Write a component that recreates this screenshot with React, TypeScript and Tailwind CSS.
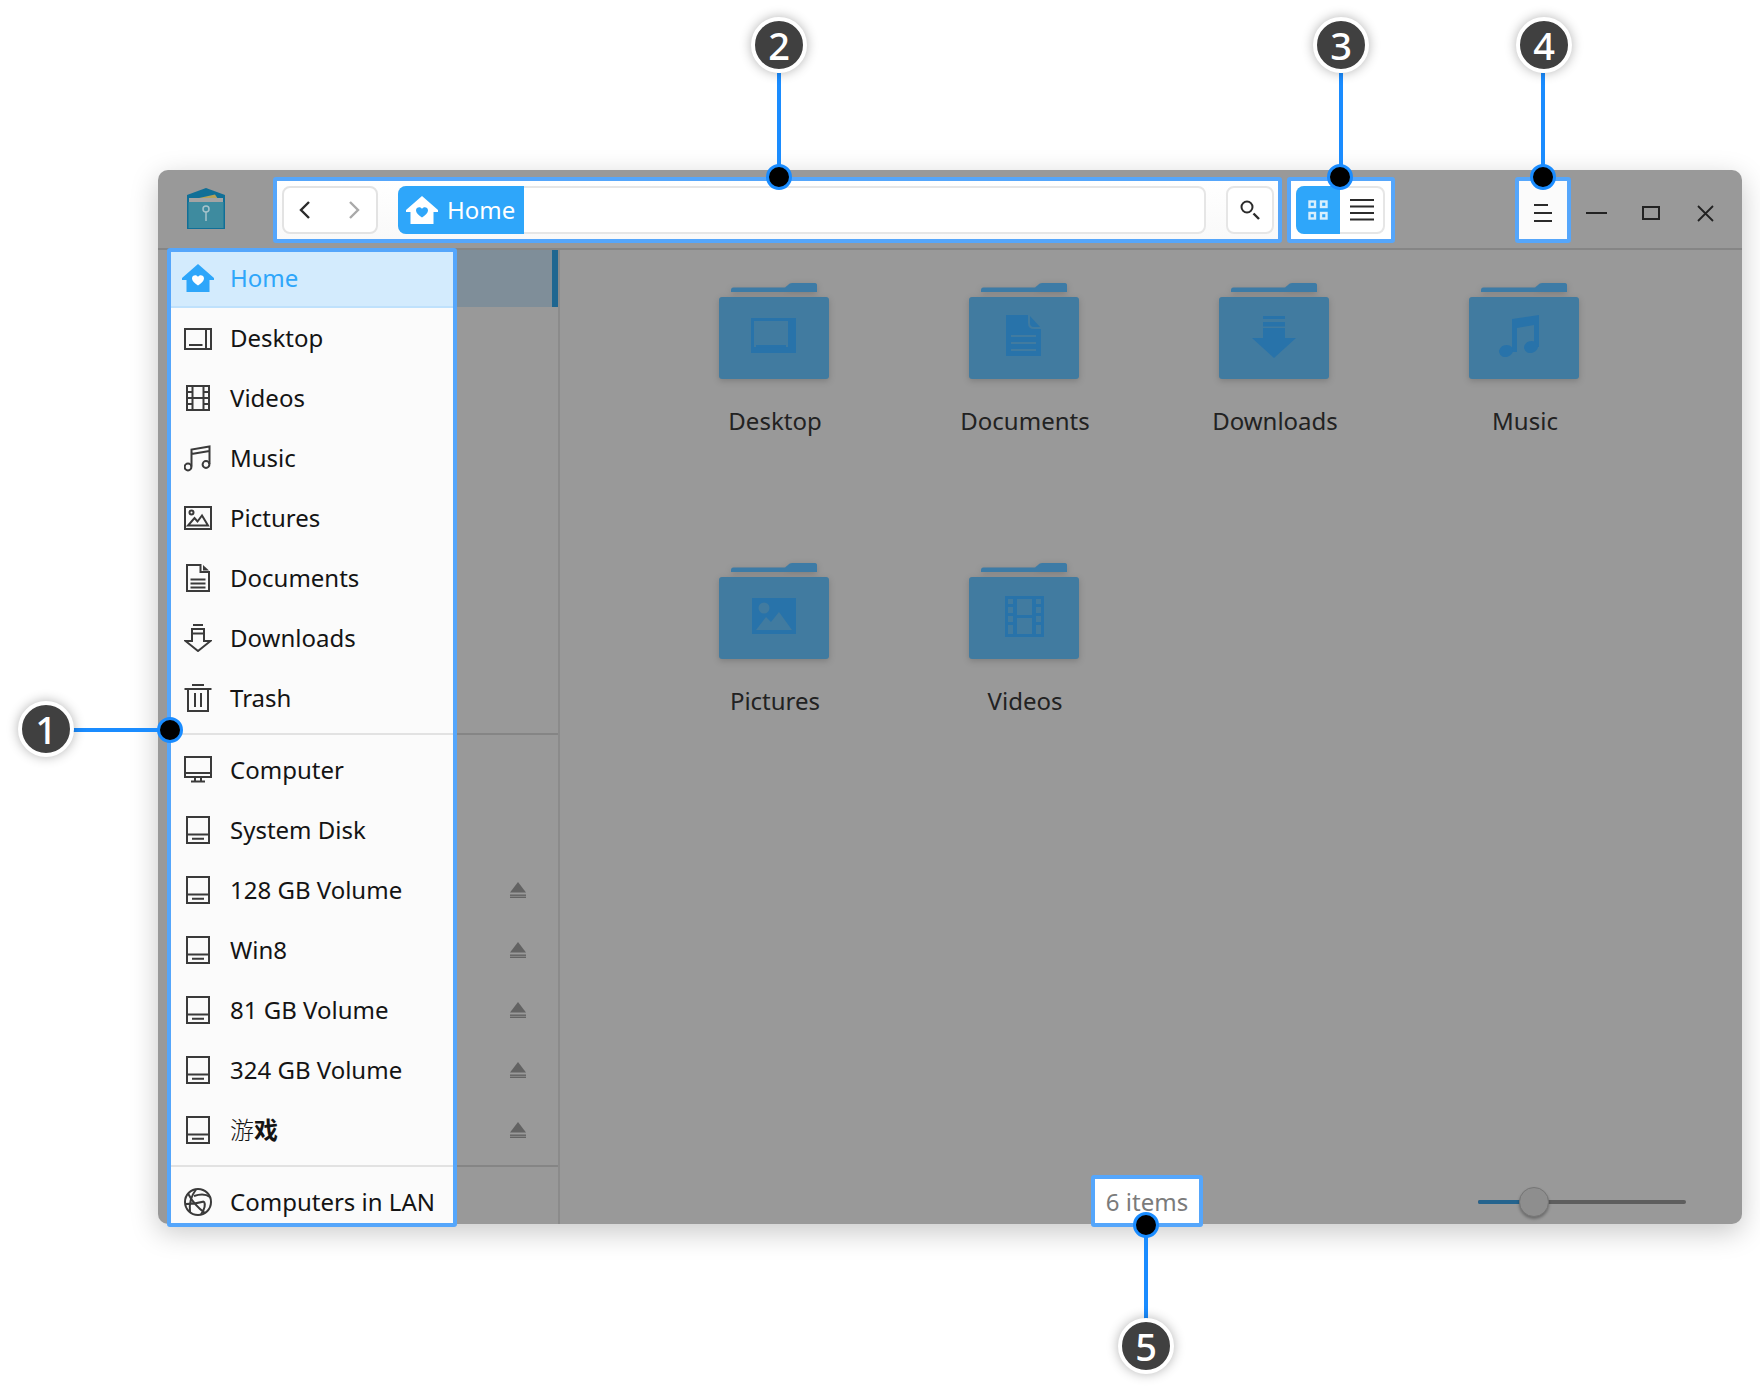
import type { ReactNode } from "react";

const FONT = 'font-["Noto_Sans","Noto_Sans_CJK_SC",sans-serif]';

// sidebar line icons, 28 box
const Line = ({ children }: { children: ReactNode }) => (
  <svg width="28" height="28" viewBox="0 0 28 28" fill="none" stroke="#3a3a3a" strokeWidth="2" className="shrink-0">
    {children}
  </svg>
);

const HouseIcon = ({ body, heart }: { body: string; heart: string }) => (
  <svg width="32" height="28" viewBox="0 0 32 28" className="shrink-0">
    <path d="M16 0 L32 14 V16 H27.5 V28 H4.5 V16 H0 V14 Z" fill={body} />
    <path d="M16 21.5 C12.5 19 10 17 10 14.4 C10 12.4 11.6 11.2 13.2 11.2 C14.4 11.2 15.4 11.8 16 12.8 C16.6 11.8 17.6 11.2 18.8 11.2 C20.4 11.2 22 12.4 22 14.4 C22 17 19.5 19 16 21.5 Z" fill={heart} />
  </svg>
);

const DesktopIcon = () => (
  <Line>
    <rect x="1" y="5" width="26" height="20" />
    <path d="M22 5V25M5 21H18.5" />
  </Line>
);
const VideosIcon = () => (
  <Line>
    <rect x="3" y="2" width="22" height="24" />
    <path d="M8.5 2V26M19.5 2V26M3 8H8.5M3 14H25M3 20H8.5M19.5 8H25M19.5 20H25" />
  </Line>
);
const MusicIcon = () => (
  <Line>
    <path d="M7.5 22.5V5.5L25.5 2.5V20M7.5 10L25.5 7" />
    <circle cx="4" cy="23" r="3.4" />
    <circle cx="22" cy="20.5" r="3.4" />
  </Line>
);
const PicturesIcon = () => (
  <Line>
    <rect x="1" y="3" width="26" height="22" />
    <circle cx="7.5" cy="8.5" r="2" />
    <path d="M4 21.5H24L18 11.5L13.5 17.5L10.5 14Z" />
  </Line>
);
const DocumentsIcon = () => (
  <Line>
    <path d="M3 1H16.5V8H25V27H3Z" />
    <path d="M19 1L25 6.5H19Z" fill="#3a3a3a" stroke="none" />
    <path d="M6.5 15.5H21.5M6.5 19.5H21.5M6.5 23.5H21.5" />
  </Line>
);
const DownloadsIcon = () => (
  <Line>
    <path d="M9 1H19M8 5H20V9.5H8ZM8 9.5V17H1.5L14 27L26.5 17H20V9.5" />
  </Line>
);
const TrashIcon = () => (
  <Line>
    <path d="M8 1H20M0.5 5H27.5M4 5V27H24V5M11 9V23M17 9V23" />
  </Line>
);
const ComputerIcon = () => (
  <Line>
    <rect x="1" y="1" width="26" height="20" />
    <path d="M1 17H27M11 21V25M17 21V25M7 25.5H21" />
  </Line>
);
const DiskIcon = () => (
  <Line>
    <rect x="3" y="1" width="22" height="26" />
    <path d="M3 18.5H25M8 22.8H20" />
  </Line>
);
const LanIcon = () => (
  <Line>
    <circle cx="14" cy="14" r="13" />
    <path d="M4 5.5C8 13 14 20 21 25M12 1.5C7 8 5 15 6 24M10 8C16 6 22 6 26 9M20 13.5C22 17 20 22 17 26.5M2 16C8 16 15 15 20 13.5" />
  </Line>
);

const Eject = () => (
  <svg width="16" height="16" viewBox="0 0 16 16" fill="#636363">
    <path d="M8 0L16 10.5H0Z" />
    <rect y="12.5" width="16" height="1.4" />
    <rect y="14.6" width="16" height="1.4" />
  </svg>
);

const Logo = () => (
  <svg width="38" height="42" viewBox="0 0 38 42" className="shrink-0 mt-[11px]">
    <path d="M0 7L19 0L38 7V41H0Z" fill="#106f97" />
    <path d="M3 12L28 6.5L33 14H3Z" fill="#b4a25a" />
    <rect x="2" y="10" width="34" height="5" fill="#a3a3a3" />
    <rect x="1.5" y="14" width="35" height="26" fill="#3e8b9f" />
    <circle cx="19" cy="21" r="3" fill="none" stroke="#a6c3cb" strokeWidth="1.5" />
    <path d="M19 24V33" stroke="#a6c3cb" strokeWidth="1.5" />
  </svg>
);

// folder glyphs, drawn on the body
const G = "#2873aa";
const glyphs: Record<string, ReactNode> = {
  Desktop: (
    <>
      <rect x="32" y="21" width="45" height="35" fill={G} />
      <rect x="35" y="24" width="34" height="26" fill="#417ba0" />
      <rect x="37" y="48" width="30" height="2.5" fill={G} />
    </>
  ),
  Documents: (
    <>
      <path d="M37 18H60L72 31V59H37Z" fill={G} />
      <path d="M60 18V26C60 29 62 31 65 31H72" fill="none" stroke="#417ba0" strokeWidth="2" />
      <path d="M42 39H67M42 46H67M42 53H67" stroke="#417ba0" strokeWidth="2" />
    </>
  ),
  Downloads: (
    <>
      <rect x="44" y="19" width="22" height="3" fill={G} />
      <rect x="44" y="25" width="22" height="4.5" fill={G} />
      <path d="M44 31H66V41H77L55 61L33 41H44Z" fill={G} />
    </>
  ),
  Music: (
    <>
      <path d="M43 22L70 18V50H65V28L48 31V55H43Z" fill={G} />
      <ellipse cx="37" cy="54" rx="7" ry="6" fill={G} transform="rotate(-15 37 54)" />
      <ellipse cx="62" cy="50" rx="7" ry="6" fill={G} transform="rotate(-15 62 50)" />
    </>
  ),
  Pictures: (
    <>
      <rect x="33" y="21" width="44" height="36" fill={G} />
      <circle cx="45" cy="31" r="5.5" fill="#417ba0" />
      <path d="M37 53L47 40L52 45L60 35L73 53Z" fill="#417ba0" />
    </>
  ),
  Videos: (
    <>
      <rect x="36" y="19" width="39" height="41" fill={G} />
      <path d="M39 22H44V27H39ZM39 30H44V36H39ZM39 39H44V45H39ZM39 48H44V57H39ZM67 22H72V27H67ZM67 30H72V36H67ZM67 39H72V45H67ZM67 48H72V57H67ZM48 22H63V38H48ZM48 41H63V57H48Z" fill="#417ba0" />
    </>
  ),
};

const Folder = ({ name }: { name: string }) => (
  <div className="h-[280px] flex flex-col items-center">
    <svg width="110" height="96" viewBox="0 0 110 96" className="drop-shadow-[0_2px_3px_rgba(0,0,0,0.18)]">
      <path d="M12 7C12 5.5 13 4.5 14 4.5H66L69 2C70 0.7 71.5 0 73 0H96C97.5 0 98 1 98 2V9H12Z" fill="#3d7ba6" />
      <rect x="0" y="14" width="110" height="82" rx="3" fill="#417ba0" />
      <g transform="translate(0 14)">{glyphs[name]}</g>
    </svg>
    <span className="mt-[25px] ml-[2px] text-[24px] leading-[34px] text-[#222222]">{name}</span>
  </div>
);

const Callout = ({ n, x, y }: { n: number; x: number; y: number }) => (
  <div
    className="absolute w-[56px] h-[56px] rounded-full bg-[#404040] border-4 border-white shadow-[0_0_12px_rgba(0,0,0,0.3)] flex items-center justify-center text-white text-[38px] font-medium z-30"
    style={{ left: x - 28, top: y - 28 }}
  >
    {n}
  </div>
);

const Dot = ({ x, y }: { x: number; y: number }) => (
  <div
    className="absolute w-[26px] h-[26px] rounded-full bg-black border-[3px] border-[#1a8cff] z-30"
    style={{ left: x - 13, top: y - 13 }}
  />
);

const places = [
  { name: "Desktop", icon: <DesktopIcon /> },
  { name: "Videos", icon: <VideosIcon /> },
  { name: "Music", icon: <MusicIcon /> },
  { name: "Pictures", icon: <PicturesIcon /> },
  { name: "Documents", icon: <DocumentsIcon /> },
  { name: "Downloads", icon: <DownloadsIcon /> },
  { name: "Trash", icon: <TrashIcon /> },
];

const disks: { name: ReactNode; icon: ReactNode }[] = [
  { name: "Computer", icon: <ComputerIcon /> },
  { name: "System Disk", icon: <DiskIcon /> },
  { name: "128 GB Volume", icon: <DiskIcon /> },
  { name: "Win8", icon: <DiskIcon /> },
  { name: "81 GB Volume", icon: <DiskIcon /> },
  { name: "324 GB Volume", icon: <DiskIcon /> },
  {
    name: (
      <>
        <span className="font-light">游</span>
        <span className="font-bold">戏</span>
      </>
    ),
    icon: <DiskIcon />,
  },
];

const Row = ({ icon, children }: { icon: ReactNode; children: ReactNode }) => (
  <div className="h-[60px] shrink-0 flex items-center pl-[13px] gap-[18px] text-[24px] text-[#141414] whitespace-nowrap">
    {icon}
    <span>{children}</span>
  </div>
);

const LIT = "border-4 border-[#55a6fb] rounded-[3px] bg-[#fbfbfb]";

export default function App() {
  return (
    <div className={`relative w-[1760px] h-[1392px] bg-white overflow-hidden pt-[170px] pl-[158px] ${FONT}`}>
      <div className="w-[1584px] h-[1054px] rounded-[10px] bg-[#999999] shadow-[0_8px_28px_rgba(0,0,0,0.22)] flex flex-col">
        {/* title bar */}
        <div className="h-[80px] shrink-0 border-b-2 border-[#858585] flex items-start pt-[7px] pl-[29px]">
          <Logo />
          <div className={`${LIT} ml-[48px] w-[1009px] h-[66px] flex items-center pl-[5px] pr-[4px] bg-gradient-to-b from-white to-[#f9f9f9]`}>
            <div className="w-[96px] h-[48px] shrink-0 rounded-[8px] border-2 border-[#e3e3e3] bg-white flex items-center justify-between pl-[14px] pr-[15px]">
              <svg width="14" height="20" viewBox="0 0 14 20" fill="none" stroke="#2b2b2b" strokeWidth="2.4"><path d="M11 2L3 10L11 18" /></svg>
              <svg width="14" height="20" viewBox="0 0 14 20" fill="none" stroke="#a9a9a9" strokeWidth="2.4"><path d="M3 2L11 10L3 18" /></svg>
            </div>
            <div className="ml-[20px] w-[808px] h-[48px] shrink-0 rounded-[8px] border-2 border-[#e6e6e6] bg-white flex items-center">
              <div className="-ml-[2px] w-[126px] h-[48px] shrink-0 bg-[#2ea6fa] rounded-l-[8px] flex items-center pl-[8px] gap-[9px] text-white text-[24px]">
                <HouseIcon body="#ffffff" heart="#2ea6fa" />
                <span>Home</span>
              </div>
            </div>
            <div className="ml-[20px] w-[48px] h-[48px] shrink-0 rounded-[8px] border-2 border-[#e6e6e6] bg-white flex items-center justify-center">
              <svg width="22" height="22" viewBox="0 0 22 22" fill="none" stroke="#2b2b2b"><circle cx="8" cy="8" r="5.5" strokeWidth="2" /><path d="M14.5 14.5L20 20" strokeWidth="2.4" /></svg>
            </div>
          </div>
          <div className={`${LIT} ml-[5px] w-[108px] h-[66px] flex items-center px-[5px] bg-white`}>
            <div className="w-[89px] h-[48px] shrink-0 rounded-[8px] border-2 border-[#e6e6e6] flex items-center">
              <div className="-ml-[2px] w-[44px] h-[48px] shrink-0 bg-[#2ea6fa] rounded-l-[8px] flex items-center justify-center">
                <svg width="20" height="20" viewBox="0 0 20 20" fill="none" stroke="#d8effd" strokeWidth="2.4">
                  <rect x="1.5" y="1.5" width="5.5" height="5.5" /><rect x="13" y="1.5" width="5.5" height="5.5" /><rect x="1.5" y="13" width="5.5" height="5.5" /><rect x="13" y="13" width="5.5" height="5.5" />
                </svg>
              </div>
              <svg width="24" height="22" viewBox="0 0 24 22" stroke="#2b2b2b" strokeWidth="2" className="ml-[10px]">
                <path d="M0 1H24M0 7.5H24M0 14H24M0 20.5H24" />
              </svg>
            </div>
          </div>
          <div className={`${LIT} ml-[120px] w-[56px] h-[66px] flex items-center justify-center pt-[5px]`}>
            <svg width="18" height="18" viewBox="0 0 18 18" stroke="#2b2b2b" strokeWidth="1.8"><path d="M0 1H14M0 9H18M0 17H18" /></svg>
          </div>
          <div className="mt-[26px] h-[20px] flex items-center">
            <svg width="21" height="2" className="ml-[15px]"><rect width="21" height="2" fill="#222222" /></svg>
            <svg width="18" height="14" viewBox="0 0 18 14" fill="none" stroke="#222222" strokeWidth="2" className="ml-[35px]"><rect x="1" y="1" width="16" height="12" /></svg>
            <svg width="17" height="17" viewBox="0 0 17 17" stroke="#222222" strokeWidth="1.8" className="ml-[37px]"><path d="M1 1L16 16M16 1L1 16" /></svg>
          </div>
        </div>

        <div className="flex flex-1 min-h-0">
          {/* sidebar */}
          <div className="w-[402px] shrink-0 border-r-2 border-[#8b8b8b] flex">
            <div className={`${LIT} ml-[9px] -mt-[2px] w-[290px] h-[979px] shrink-0 overflow-hidden relative z-10`}>
              <div className="h-[56px] pb-[2px] bg-[#d3ebfd] border-b-2 border-[#bfe1fc] flex items-center pl-[11px] gap-[16px] text-[24px] text-[#2ea6fa]">
                <HouseIcon body="#2ea6fa" heart="#ffffff" />
                <span>Home</span>
              </div>
              {places.map((p) => (
                <Row key={p.name} icon={p.icon}>{p.name}</Row>
              ))}
              <div className="mt-[5px] h-[2px] bg-[#e2e2e2]" />
              <div className="mt-[5px]">
                {disks.map((d, i) => (
                  <Row key={i} icon={d.icon}>{d.name}</Row>
                ))}
              </div>
              <div className="mt-[5px] h-[2px] bg-[#e2e2e2]" />
              <div className="mt-[5px]">
                <Row icon={<LanIcon />}>Computers in LAN</Row>
              </div>
            </div>
            <div className="flex-1 flex flex-col">
              <div className="h-[57px] shrink-0 bg-[#7f8e99] border-r-[6px] border-[#1f6690]" />
              <div className="h-[426px] shrink-0" />
              <div className="h-[2px] shrink-0 bg-[#858585]" />
              <div className="h-[125px] shrink-0" />
              {[0, 1, 2, 3, 4].map((i) => (
                <div key={i} className="h-[60px] shrink-0 flex items-center pl-[53px]">
                  <Eject />
                </div>
              ))}
              <div className="h-[5px] shrink-0" />
              <div className="h-[2px] shrink-0 bg-[#858585]" />
            </div>
          </div>

          {/* main */}
          <div className="flex-1 flex flex-col min-w-0">
            <div className="flex-1 pt-[33px] pl-[89px] grid grid-cols-[250px_250px_250px_250px] content-start">
              {["Desktop", "Documents", "Downloads", "Music", "Pictures", "Videos"].map((n) => (
                <Folder key={n} name={n} />
              ))}
            </div>
            <div className="h-[49px] shrink-0 flex items-start">
              <div className={`${LIT} bg-white ml-[531px] -mb-[3px] w-[112px] h-[52px] flex items-center justify-center pt-[2px] text-[24px] text-[#7b7b7b] relative z-10`}>
                6 items
              </div>
              <div className="relative ml-[275px] mt-[25px] w-[208px] h-[4px] rounded-full bg-[#5e5e5e]">
                <div className="h-full w-[60px] rounded-l-full bg-[#25648e]" />
                <div className="absolute left-[41px] -top-[13px] w-[30px] h-[30px] rounded-full bg-[#8e8e8e] border border-[#767676] shadow-[0_2px_3px_rgba(0,0,0,0.3)]" />
              </div>
            </div>
          </div>
        </div>
      </div>

      {/* numbered callouts */}
      <div className="absolute left-[73px] top-[728px] w-[90px] h-[4px] bg-[#1a8cff] z-20" />
      <div className="absolute left-[777px] top-[73px] w-[4px] h-[95px] bg-[#1a8cff] z-20" />
      <div className="absolute left-[1339px] top-[73px] w-[4px] h-[95px] bg-[#1a8cff] z-20" />
      <div className="absolute left-[1541px] top-[73px] w-[4px] h-[95px] bg-[#1a8cff] z-20" />
      <div className="absolute left-[1144px] top-[1235px] w-[4px] h-[85px] bg-[#1a8cff] z-20" />
      <Callout n={1} x={46} y={729} />
      <Callout n={2} x={779} y={45} />
      <Callout n={3} x={1341} y={45} />
      <Callout n={4} x={1544} y={45} />
      <Callout n={5} x={1146} y={1346} />
      <Dot x={170} y={730} />
      <Dot x={779} y={177} />
      <Dot x={1340} y={177} />
      <Dot x={1543} y={177} />
      <Dot x={1146} y={1225} />
    </div>
  );
}
